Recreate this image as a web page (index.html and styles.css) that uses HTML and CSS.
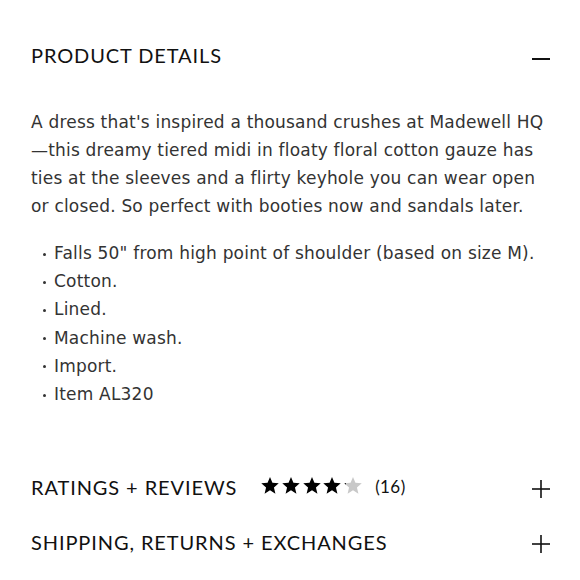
FILE: index.html
```html
<!DOCTYPE html>
<html>
<head>
  <title>Product Details</title>
  <meta name="viewport" content="width=device-width, initial-scale=1.0">
  <link rel="stylesheet" href="styles.css">
</head>
<body>
  <div class="accordion">
    <div class="acc-item open">
      <div class="acc-head">
        <h2>PRODUCT DETAILS</h2>
        <svg class="acc-icon" width="18" height="18" viewBox="0 0 18 18">
          <line x1="0" y1="9" x2="18" y2="9" stroke="#111" stroke-width="2"/>
        </svg>
      </div>
      <div class="acc-body">
        <p>A dress that's inspired a thousand crushes at Madewell HQ—this dreamy tiered midi in floaty floral cotton gauze has ties at the sleeves and a flirty keyhole you can wear open or closed. So perfect with booties now and sandals later.</p>
        <ul class="specs">
          <li>Falls 50" from high point of shoulder (based on size M).</li>
          <li>Cotton.</li>
          <li>Lined.</li>
          <li>Machine wash.</li>
          <li>Import.</li>
          <li>Item AL320</li>
        </ul>
      </div>
    </div>

    <div class="acc-item">
      <div class="acc-head">
        <h2>RATINGS + REVIEWS</h2>
        <div class="rating">
          <svg class="stars" width="102" height="17" viewBox="0 0 102 17">
            <defs>
              <path id="star" d="M9 0 L11.43 5.85 L17.75 6.36 L12.94 10.48 L14.41 16.64 L9 13.34 L3.59 16.64 L5.06 10.48 L0.25 6.36 L6.57 5.85 Z"/>
              <linearGradient id="part">
                <stop offset="0.12" stop-color="#000"/>
                <stop offset="0.12" stop-color="#c8c8c8"/>
              </linearGradient>
            </defs>
            <use href="#star" x="0" fill="#000"/>
            <use href="#star" x="21" fill="#000"/>
            <use href="#star" x="42" fill="#000"/>
            <use href="#star" x="62" fill="#000"/>
            <use href="#star" x="83" fill="url(#part)"/>
          </svg>
          <span class="count">(16)</span>
        </div>
        <svg class="acc-icon" width="18" height="18" viewBox="0 0 18 18">
          <line x1="0" y1="9" x2="18" y2="9" stroke="#111" stroke-width="1.6"/>
          <line x1="9" y1="0" x2="9" y2="18" stroke="#111" stroke-width="1.6"/>
        </svg>
      </div>
    </div>

    <div class="acc-item">
      <div class="acc-head">
        <h2>SHIPPING, RETURNS + EXCHANGES</h2>
        <svg class="acc-icon" width="18" height="18" viewBox="0 0 18 18">
          <line x1="0" y1="9" x2="18" y2="9" stroke="#111" stroke-width="1.6"/>
          <line x1="9" y1="0" x2="9" y2="18" stroke="#111" stroke-width="1.6"/>
        </svg>
      </div>
    </div>
  </div>
</body>
</html>
```

FILE: styles.css
```css
body {
  margin: 0;
  background-color: #fff;
  font-family: "DejaVu Sans", sans-serif;
  color: #333;
}

.accordion {
  padding: 26px 30px 0 31px;
}

.acc-head {
  display: flex;
  align-items: center;
  padding: 15.5px 0;
}

.open .acc-head {
  padding: 16px 0;
}

.acc-head h2 {
  margin: 0;
  font-family: Lato, sans-serif;
  font-size: 20px;
  font-weight: 400;
  line-height: 24px;
  letter-spacing: 0.9px;
  color: #111;
}

.acc-icon {
  margin-left: auto;
  flex-shrink: 0;
  margin-top: 5px;
}

.open .acc-icon {
  margin-top: 8px;
}

.acc-body {
  padding: 24px 0 51px;
  font-size: 17px;
  line-height: 28px;
  letter-spacing: 0.2px;
}

.acc-body p {
  margin: 0 0 19px;
}

.specs {
  list-style: none;
  margin: 0;
  padding: 0;
}

.specs li {
  display: flex;
  align-items: center;
  line-height: 28.2px;
}

.specs li::before {
  content: "";
  width: 3px;
  height: 3px;
  border-radius: 50%;
  background-color: #333;
  margin: 2px 8px 0 12px;
  flex-shrink: 0;
}

.rating {
  display: flex;
  align-items: center;
  margin-left: 24px;
}

.stars {
  margin-bottom: 3px;
}

.count {
  margin-left: 12px;
  font-family: Lato, sans-serif;
  font-size: 17px;
  letter-spacing: 0.4px;
  color: #111;
}
```
